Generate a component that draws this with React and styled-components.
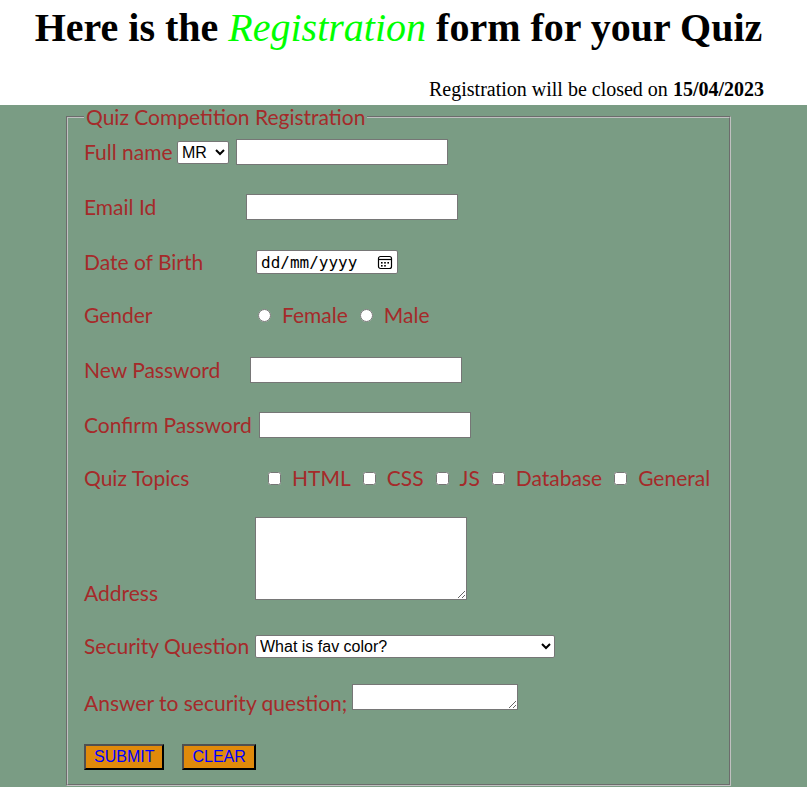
import styled, { createGlobalStyle } from "styled-components"

const GlobalStyle = createGlobalStyle`
  body {
    margin: 0;
    background: #ffffff;
  }
`

// Header block on white
const Title = styled.h1`
  margin: 4px 0 0;
  padding-right: 10px;
  text-align: center;
  font-family: "Liberation Serif", "Times New Roman", serif;
  font-size: 40px;
  font-weight: 700;
  color: #000000;
`
const Highlight = styled.em`
  color: #00ff00;
  font-weight: 400;
`
const Notice = styled.p`
  margin: 27px 0 4px;
  padding-right: 43px;
  text-align: right;
  font-family: "Liberation Serif", "Times New Roman", serif;
  font-size: 20px;
  color: #000000;
`

// The green band with the form
const Band = styled.section`
  background: #7a9c84;
  padding-bottom: 1px;
`
const Fieldset = styled.fieldset`
  box-sizing: border-box;
  width: 665px;
  min-width: 0;
  min-inline-size: 0;
  margin: 0 0 0 66px;
  padding: 10px 14px 14px 16px;
  border: 2px groove #c0c0c0;
  font-family: Lato, "Open Sans", sans-serif;
`
const Legend = styled.legend`
  padding: 0 2px;
  font-size: 21px;
  line-height: 24px;
  color: #a52a2a;
`
const Row = styled.div`
  display: flex;
  align-items: ${({ $align }) => $align || "center"};
  min-height: 26px;
  margin-top: ${({ $mt }) => $mt || 0}px;
  white-space: nowrap;
`
const Label = styled.label`
  flex-shrink: 0;
  width: ${({ $w }) => $w}px;
  margin-bottom: ${({ $sink }) => ($sink ? -5 : 0)}px;
  font-size: 21px;
  line-height: 24px;
  color: #a52a2a;
  white-space: nowrap;
`
const TextInput = styled.input`
  box-sizing: border-box;
  width: 212px;
  height: 26px;
  margin: 0;
  padding: 1px 2px;
  border: 1px solid #767676;
  background: #ffffff;
  font: 16px "Liberation Sans", Arial, sans-serif;
`
const Select = styled.select`
  box-sizing: border-box;
  width: ${({ $w }) => $w}px;
  height: 23px;
  margin: 0 ${({ $mr }) => $mr || 0}px 0 0;
  border: 1px solid #767676;
  border-radius: 2px;
  background: #ffffff;
  color: #000000;
  font: 16px "Liberation Sans", Arial, sans-serif;
`
const DateBox = styled.div`
  box-sizing: border-box;
  display: flex;
  align-items: center;
  justify-content: space-between;
  width: 142px;
  height: 24px;
  padding: 0 4px 0 4px;
  border: 1px solid #767676;
  border-radius: 2px;
  background: #ffffff;
  font: 16px "DejaVu Sans Mono", "Liberation Mono", monospace;
  color: #000000;
`
const Choice = styled.input`
  width: 13px;
  height: 13px;
  margin: 0;
  flex-shrink: 0;
`
const ChoiceText = styled.span`
  margin: 0 12px 0 11px;
  font-size: 21px;
  line-height: 24px;
  color: #a52a2a;
`
const TextArea = styled.textarea`
  box-sizing: border-box;
  width: ${({ $w }) => $w}px;
  height: ${({ $h }) => $h}px;
  margin: 0;
  padding: 2px;
  border: 1px solid #767676;
  background: #ffffff;
  font: 14px "Liberation Mono", monospace;
`
const Buttons = styled.div`
  display: flex;
  gap: 18px;
  margin-top: 34px;
`
const Button = styled.button`
  height: 26px;
  padding: 0 8px;
  border: 2px solid;
  border-color: #505050 #000000 #000000 #505050;
  background: #e08a0b;
  color: #0000ff;
  font: 16px "Liberation Sans", Arial, sans-serif;
  cursor: pointer;
`

function CalendarIcon() {
  return (
    <svg width="16" height="16" viewBox="0 0 16 16" fill="none">
      <rect x="1.5" y="2.5" width="13" height="12" rx="2" stroke="#000" strokeWidth="1.2" />
      <line x1="1.5" y1="5.5" x2="14.5" y2="5.5" stroke="#000" strokeWidth="1.2" />
      <rect x="4" y="8" width="1.6" height="1.6" fill="#000" />
      <rect x="7.2" y="8" width="1.6" height="1.6" fill="#000" />
      <rect x="10.4" y="8" width="1.6" height="1.6" fill="#000" />
      <rect x="4" y="11" width="1.6" height="1.6" fill="#000" />
      <rect x="7.2" y="11" width="1.6" height="1.6" fill="#000" />
    </svg>
  )
}

const topics = ["HTML", "CSS", "JS", "Database", "General"]

export default function App() {
  return (
    <>
      <GlobalStyle />
      <Title>
        Here is the <Highlight>Registration</Highlight> form for your Quiz
      </Title>
      <Notice>
        Registration will be closed on <b>15/04/2023</b>
      </Notice>
      <Band>
        <form onSubmit={(e) => e.preventDefault()}>
          <Fieldset>
            <Legend>Quiz Competition Registration</Legend>

            <Row>
              <Label $w={93}>Full name</Label>
              <Select $w={52} $mr={7} defaultValue="MR">
                <option>MR</option>
                <option>MS</option>
                <option>MRS</option>
              </Select>
              <TextInput type="text" />
            </Row>

            <Row $mt={29}>
              <Label $w={162}>Email Id</Label>
              <TextInput type="email" />
            </Row>

            <Row $mt={29}>
              <Label $w={172}>Date of Birth</Label>
              <DateBox>
                <span>dd/mm/yyyy</span>
                <CalendarIcon />
              </DateBox>
            </Row>

            <Row $mt={27}>
              <Label $w={174}>Gender</Label>
              <Choice type="radio" name="gender" />
              <ChoiceText>Female</ChoiceText>
              <Choice type="radio" name="gender" />
              <ChoiceText>Male</ChoiceText>
            </Row>

            <Row $mt={29}>
              <Label $w={166}>New Password</Label>
              <TextInput type="password" />
            </Row>

            <Row $mt={29}>
              <Label $w={175}>Confirm Password</Label>
              <TextInput type="password" />
            </Row>

            <Row $mt={27}>
              <Label $w={184}>Quiz Topics</Label>
              {topics.map((t) => (
                <span key={t} style={{ display: "contents" }}>
                  <Choice type="checkbox" />
                  <ChoiceText>{t}</ChoiceText>
                </span>
              ))}
            </Row>

            <Row $mt={26} $align="flex-end">
              <Label $w={171} $sink>Address</Label>
              <TextArea $w={212} $h={83} />
            </Row>

            <Row $mt={33}>
              <Label $w={171}>Security Question</Label>
              <Select $w={300} defaultValue="What is fav color?">
                <option>What is fav color?</option>
                <option>What is your pet's name?</option>
                <option>What is your birth city?</option>
              </Select>
            </Row>

            <Row $mt={25} $align="flex-end">
              <Label $w={268} $sink>Answer to security question;</Label>
              <TextArea $w={166} $h={26} />
            </Row>

            <Buttons>
              <Button type="submit">SUBMIT</Button>
              <Button type="reset">CLEAR</Button>
            </Buttons>
          </Fieldset>
        </form>
      </Band>
    </>
  )
}
